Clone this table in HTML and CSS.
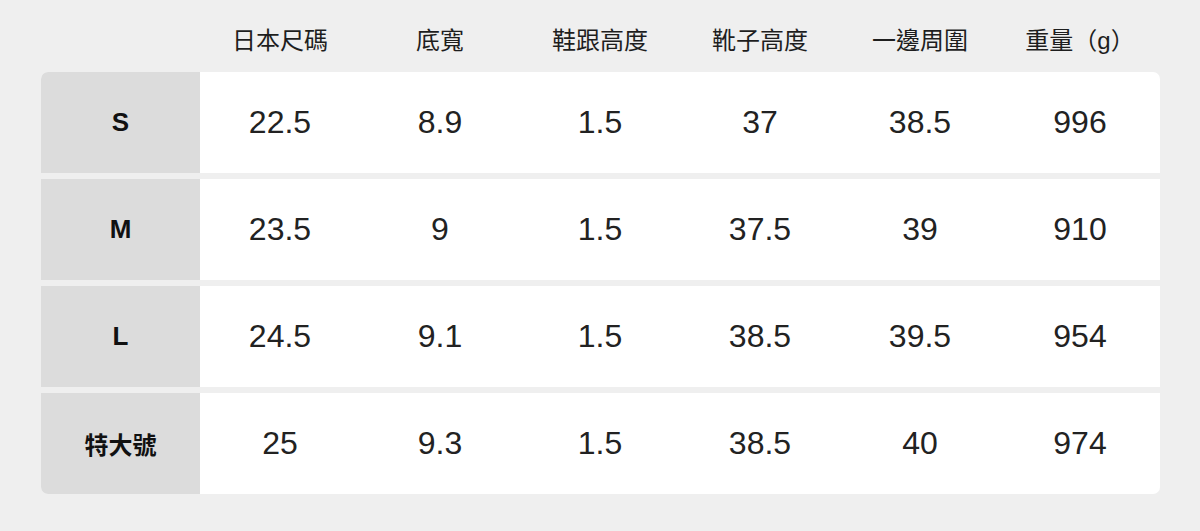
FILE: index.html
```html
<!DOCTYPE html>
<html lang="zh-Hant">
<head>
<meta charset="utf-8">
<link rel="stylesheet" href="styles.css">
</head>
<body>
<div class="page">
  <div class="head">
    <div class="hcell"></div>
    <div class="hcell">日本尺碼</div>
    <div class="hcell">底寬</div>
    <div class="hcell">鞋跟高度</div>
    <div class="hcell">靴子高度</div>
    <div class="hcell">一邊周圍</div>
    <div class="hcell">重量（g）</div>
  </div>
  <div class="table">
    <div class="row">
      <div class="label latin">S</div>
      <div class="cell">22.5</div><div class="cell">8.9</div><div class="cell">1.5</div><div class="cell">37</div><div class="cell">38.5</div><div class="cell">996</div>
    </div>
    <div class="row">
      <div class="label latin">M</div>
      <div class="cell">23.5</div><div class="cell">9</div><div class="cell">1.5</div><div class="cell">37.5</div><div class="cell">39</div><div class="cell">910</div>
    </div>
    <div class="row">
      <div class="label latin">L</div>
      <div class="cell">24.5</div><div class="cell">9.1</div><div class="cell">1.5</div><div class="cell">38.5</div><div class="cell">39.5</div><div class="cell">954</div>
    </div>
    <div class="row">
      <div class="label cjk">特大號</div>
      <div class="cell">25</div><div class="cell">9.3</div><div class="cell">1.5</div><div class="cell">38.5</div><div class="cell">40</div><div class="cell">974</div>
    </div>
  </div>
</div>
</body>
</html>
```

FILE: styles.css
```css
html, body {
  margin: 0;
  padding: 0;
  background: #efefef;
}
body {
  font-family: "Liberation Sans", "Noto Sans CJK TC", sans-serif;
  color: #1c1c1c;
  width: 1200px;
  height: 531px;
  overflow: hidden;
}
.page {
  margin-left: 41px;
  width: 1119px;
}
.head {
  display: grid;
  grid-template-columns: 159px repeat(6, 160px);
  height: 62px;
  padding-top: 10px;
  align-items: center;
}
.hcell {
  text-align: center;
  font-family: "Liberation Sans", "Noto Sans CJK TC", sans-serif;
  font-size: 24px;
  font-weight: 400;
  color: #1e1e1e;
  line-height: 1;
}
.table {
  display: flex;
  flex-direction: column;
  gap: 6px;
  border-radius: 7px;
  overflow: hidden;
}
.row {
  display: grid;
  grid-template-columns: 159px repeat(6, 160px);
  height: 101px;
  background: #ffffff;
}
.label {
  background: #dcdcdc;
  display: flex;
  align-items: center;
  justify-content: center;
  font-weight: 700;
  color: #111;
}
.label.latin {
  font-family: "Liberation Sans", sans-serif;
  font-size: 26px;
}
.label.cjk {
  font-family: "Noto Sans CJK TC", sans-serif;
  font-size: 24px;
}
.cell {
  display: flex;
  align-items: center;
  justify-content: center;
  font-size: 32px;
  color: #222;
}
```
